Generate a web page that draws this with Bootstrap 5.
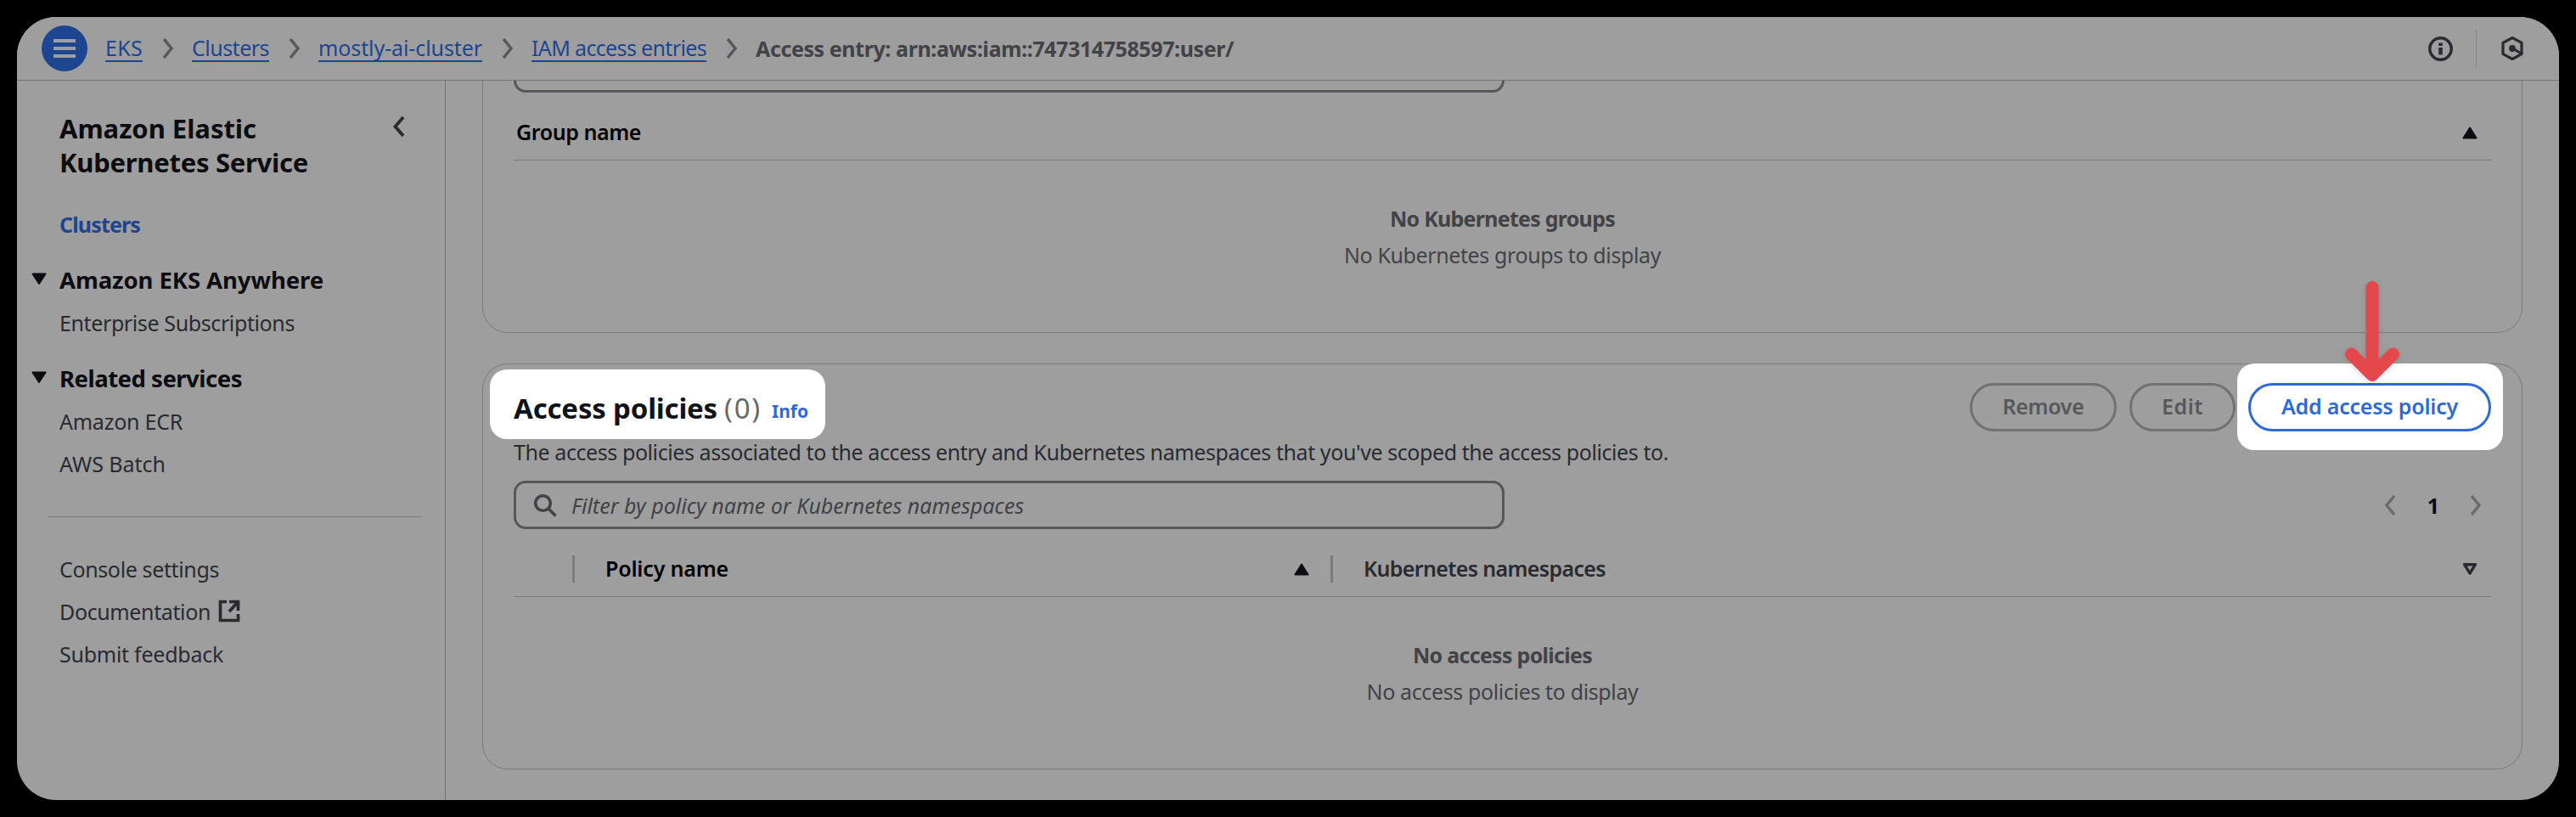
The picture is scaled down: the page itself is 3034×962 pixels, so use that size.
<!DOCTYPE html>
<html lang="en">
<head>
<meta charset="utf-8">
<title>Access entry</title>
<link href="https://cdn.jsdelivr.net/npm/bootstrap@5.3.0/dist/css/bootstrap.min.css" rel="stylesheet">
<style>
:root{--bg:#9e9e9e;--ink:#0b0d11;--text:#292b31;--muted:#414347;--line:#797b7d;--field:#57575b;--link:#1e4590}
body{background:#000;padding:20px;height:962px;overflow:hidden;font-family:"Noto Sans","Liberation Sans",sans-serif;font-size:25px;line-height:50px;color:var(--text)}
svg{display:block;flex:none}
[data-w]{white-space:pre;flex:none}
.window{width:2994px;height:922px;border-radius:46px;background:var(--bg)}
.topbar{height:75px;border-bottom:1px solid #737577;padding:0 42px 0 29px;position:relative;z-index:2;background:var(--bg)}
.menu-btn{width:54px;height:54px;background:var(--link);margin-right:21px}
.crumbs{line-height:34px;color:var(--muted)}
.crumbs a{color:var(--link);text-decoration:none;border-bottom:2px solid var(--link);height:34px;margin-top:-2px}
.crumbs svg{margin:0 21px 0 23px}
.tool-sep{width:1px;height:45px;background:#858688;margin:0 29px 0 27px}
.side{width:505px;border-right:1px solid #6f7174;padding:36px 28px 0 50px}
.side-title{font-size:31px;line-height:40px;color:var(--ink);font-weight:700}
.side a{color:var(--text);text-decoration:none;display:flex;align-items:center;height:50px}
.side a.current{color:var(--link);font-weight:700;margin-top:28px}
.side-group{font-size:27.5px;font-weight:700;color:var(--ink);margin:16px 0 0 -33px;height:50px}
.side-group svg{margin:-4px 15px 0 0}
.side-rule{height:1px;background:#76787a;margin:37px 0 36px -14px}
.main{padding:0 43px}
.panel{border:1px solid var(--line);border-radius:30px;padding:0 36px;background:var(--bg)}
.panel-groups{height:357px;margin-top:-60px;padding-top:16px}
.panel-policies{height:478px;margin-top:36px;padding-top:22px;z-index:0}
.filter-box{width:1167px;height:57px;border:3px solid var(--field);border-radius:14px;padding-left:20px;font-style:italic;color:var(--muted)}
.filter-box svg{margin-right:17px}
.head-row{height:80px;border-bottom:1px solid var(--line);padding:26px 16px 0 3px;line-height:40px;font-weight:600}
.head-row>*{height:40px}
.head-row .col-rule{width:3px;height:32px;background:#7a7c7e;margin-top:5px;flex:none}
.head-row .first-rule{margin-left:66px;margin-right:36px}
.ns-col{width:1351px;margin-left:25px}
.ns-label{margin-left:36px}
.blank{padding-top:47px;line-height:43px;color:var(--muted)}
.heading{line-height:59px;height:57px;font-size:33px}
.title-text{color:#0f141a}
.count{color:#656871;font-weight:400}
.info{color:#2f69d4;font-size:21px;font-weight:700;line-height:66px;margin-left:12px}
.spot{position:relative}
.spot::before{content:"";position:absolute;background:#fff;border-radius:20px;z-index:-1}
.heading.spot::before{left:-28px;top:-16px;width:395px;height:82px}
.add-wrap.spot::before{left:-13px;top:-23px;width:313px;height:102px}
.pill{height:57px;border:3px solid #707173;border-radius:29px;color:#56585b;font-weight:600;font-size:25px;line-height:48px;padding:0;display:flex;justify-content:center}
.pill-add{border-color:#2f69d4;color:#2f69d4;width:286px}
.pill-remove{width:173px;margin-right:15px}
.pill-edit{width:125px;margin-right:15px}
.arrow{position:absolute;left:104px;top:-130px;filter:drop-shadow(0 2px 3px rgba(0,0,0,.15))}
.about{line-height:40px;margin-top:4px}
.tools{margin-top:14px}
.pager{padding-right:11px}
.pager b{color:var(--ink);margin:0 36px 0 37px;font-weight:700;line-height:48px}
</style>
</head>
<body>
<div class="window overflow-hidden d-flex flex-column">
  <header class="topbar d-flex align-items-center flex-shrink-0">
    <div class="menu-btn rounded-circle d-flex align-items-center justify-content-center flex-shrink-0">
      <svg width="26" height="24" fill="none" stroke="#9b9fa6" stroke-width="4"><path d="M0 3h26M0 12h26M0 21h26"/></svg>
    </div>
    <nav class="crumbs d-flex align-items-center">
      <a href="#" data-w="44">EKS</a>
      <svg width="14" height="24" fill="none" stroke="#58595c" stroke-width="3.5"><path d="M2 1l9 11-9 11"/></svg>
      <a href="#" data-w="91">Clusters</a>
      <svg width="14" height="24" fill="none" stroke="#58595c" stroke-width="3.5"><path d="M2 1l9 11-9 11"/></svg>
      <a href="#" data-w="193">mostly-ai-cluster</a>
      <svg width="14" height="24" fill="none" stroke="#58595c" stroke-width="3.5"><path d="M2 1l9 11-9 11"/></svg>
      <a href="#" data-w="206">IAM access entries</a>
      <svg width="14" height="24" fill="none" stroke="#58595c" stroke-width="3.5"><path d="M2 1l9 11-9 11"/></svg>
      <span class="fw-bold" data-w="563">Access entry: arn:aws:iam::747314758597:user/</span>
    </nav>
    <div class="ms-auto d-flex align-items-center">
      <svg width="29" height="29" viewBox="0 0 29 29"><circle cx="14.5" cy="14.5" r="12.7" fill="none" stroke="#292b31" stroke-width="3.5"/><path d="M12.2 7.5h4.6v3.6h-4.6zM12.2 13h4.6v8.5h-4.6z" fill="#292b31"/></svg>
      <div class="tool-sep"></div>
      <svg width="26" height="30" viewBox="0 0 26 30" stroke="#292b31" stroke-width="3.2" stroke-linejoin="round"><path fill="none" d="M13 2.500L24 8.300v13.400L13 27.500 2 21.700V8.300z"/><circle cx="13" cy="15" r="3.900" fill="#292b31" stroke="none"/><path d="M13.500 15l10 6"/></svg>
    </div>
  </header>

  <div class="d-flex flex-grow-1">
    <aside class="side flex-shrink-0">
      <div class="d-flex justify-content-between">
        <div class="side-title"><div><span data-w="232">Amazon Elastic</span></div><div><span data-w="293">Kubernetes Service</span></div></div>
        <svg class="me-3" width="18" height="36" fill="none" stroke="#292b31" stroke-width="3.8"><path d="M13 7L3.500 18l9.500 11"/></svg>
      </div>
      <a class="current" href="#"><span data-w="95">Clusters</span></a>
      <div class="side-group d-flex align-items-center"><svg width="18" height="15" fill="#0b0d11" stroke="#0b0d11" stroke-width="2" stroke-linejoin="round"><path d="M1.500 1.500h15L9 13z"/></svg><span data-w="311">Amazon EKS Anywhere</span></div>
      <a href="#"><span data-w="277">Enterprise Subscriptions</span></a>
      <div class="side-group d-flex align-items-center"><svg width="18" height="15" fill="#0b0d11" stroke="#0b0d11" stroke-width="2" stroke-linejoin="round"><path d="M1.500 1.500h15L9 13z"/></svg><span data-w="215">Related services</span></div>
      <a href="#"><span data-w="145">Amazon ECR</span></a>
      <a href="#"><span data-w="125">AWS Batch</span></a>
      <div class="side-rule"></div>
      <a href="#"><span data-w="188">Console settings</span></a>
      <a href="#"><span data-w="178">Documentation</span><svg class="ms-2" width="28" height="28" fill="none" stroke="#292b31" stroke-width="3.700"><path d="M11 2.500H3.500v22h21V17M14 2.500h10.500V13M24 3L14 14"/></svg></a>
      <a href="#"><span data-w="193">Submit feedback</span></a>
    </aside>

    <main class="main flex-grow-1">
      <section class="panel panel-groups">
        <div class="filter-box"></div>
        <div class="head-row d-flex justify-content-between">
          <span class="text-black" data-w="147">Group name</span>
          <svg width="18" height="40" fill="#0b0d11" stroke="#0b0d11" stroke-width="2" stroke-linejoin="round"><path d="M1.500 27.500h15L9 15.500z"/></svg>
        </div>
        <div class="blank d-flex flex-column align-items-center">
          <span class="fw-bold" data-w="265">No Kubernetes groups</span>
          <span data-w="373">No Kubernetes groups to display</span>
        </div>
      </section>

      <section class="panel panel-policies position-relative">
        <div class="d-flex justify-content-between">
          <h2 class="heading spot d-flex m-0"><b class="title-text" data-w="240">Access policies</b><span class="ms-2 count" data-w="44">(0)</span><a class="info text-decoration-none" href="#" data-w="43">Info</a></h2>
          <div class="d-flex">
            <button class="pill pill-remove bg-transparent"><span data-w="96">Remove</span></button>
            <button class="pill pill-edit bg-transparent"><span data-w="49">Edit</span></button>
            <div class="add-wrap spot">
              <button class="pill pill-add bg-transparent"><span data-w="208">Add access policy</span></button>
              <svg class="arrow" width="84" height="140" fill="none" stroke="#e5484b" stroke-width="15" stroke-linecap="round" stroke-linejoin="round"><path d="M42 17.500V118M17.500 96L42 120.500 66.500 96"/></svg>
            </div>
          </div>
        </div>
        <div class="about"><span data-w="1360">The access policies associated to the access entry and Kubernetes namespaces that you've scoped the access policies to.</span></div>
        <div class="d-flex align-items-center justify-content-between tools">
          <div class="filter-box d-flex align-items-center">
            <svg width="28" height="28" fill="none" stroke="#414347" stroke-width="3.600"><circle cx="11.500" cy="11.500" r="8.800"/><path d="M17.500 17.500l9 9"/></svg>
            <span data-w="533">Filter by policy name or Kubernetes namespaces</span>
          </div>
          <div class="d-flex align-items-center pager">
            <svg width="14" height="24" fill="none" stroke="#6a6b6d" stroke-width="3.500"><path d="M12 1L3 12l9 11"/></svg>
            <b>1</b>
            <svg width="14" height="24" fill="none" stroke="#6a6b6d" stroke-width="3.500"><path d="M2 1l9 11-9 11"/></svg>
          </div>
        </div>
        <div class="head-row d-flex">
          <span class="col-rule first-rule"></span>
          <span class="text-black" data-w="145">Policy name</span>
          <svg class="ms-auto" width="18" height="40" fill="#0b0d11" stroke="#0b0d11" stroke-width="2" stroke-linejoin="round"><path d="M1.500 27.500h15L9 15.500z"/></svg>
          <div class="ns-col d-flex">
            <span class="col-rule"></span>
            <span class="ns-label" data-w="285">Kubernetes namespaces</span>
            <svg class="ms-auto" width="18" height="40" fill="none" stroke="#292b31" stroke-width="3.400" stroke-linejoin="round"><path d="M2.500 15.700h13L9 26z"/></svg>
          </div>
        </div>
        <div class="blank d-flex flex-column align-items-center">
          <span class="fw-bold" data-w="211">No access policies</span>
          <span data-w="320">No access policies to display</span>
        </div>
      </section>
    </main>
  </div>
</div>
<script src="https://cdn.jsdelivr.net/npm/bootstrap@5.3.0/dist/js/bootstrap.bundle.min.js"></script>
<script>
// Track each label to its own measure.
document.querySelectorAll('[data-w]').forEach(el => {
  const natural = el.getBoundingClientRect().width;
  el.style.letterSpacing = ((el.dataset.w - natural) / el.textContent.length).toFixed(3) + 'px';
});
</script>
</body>
</html>
